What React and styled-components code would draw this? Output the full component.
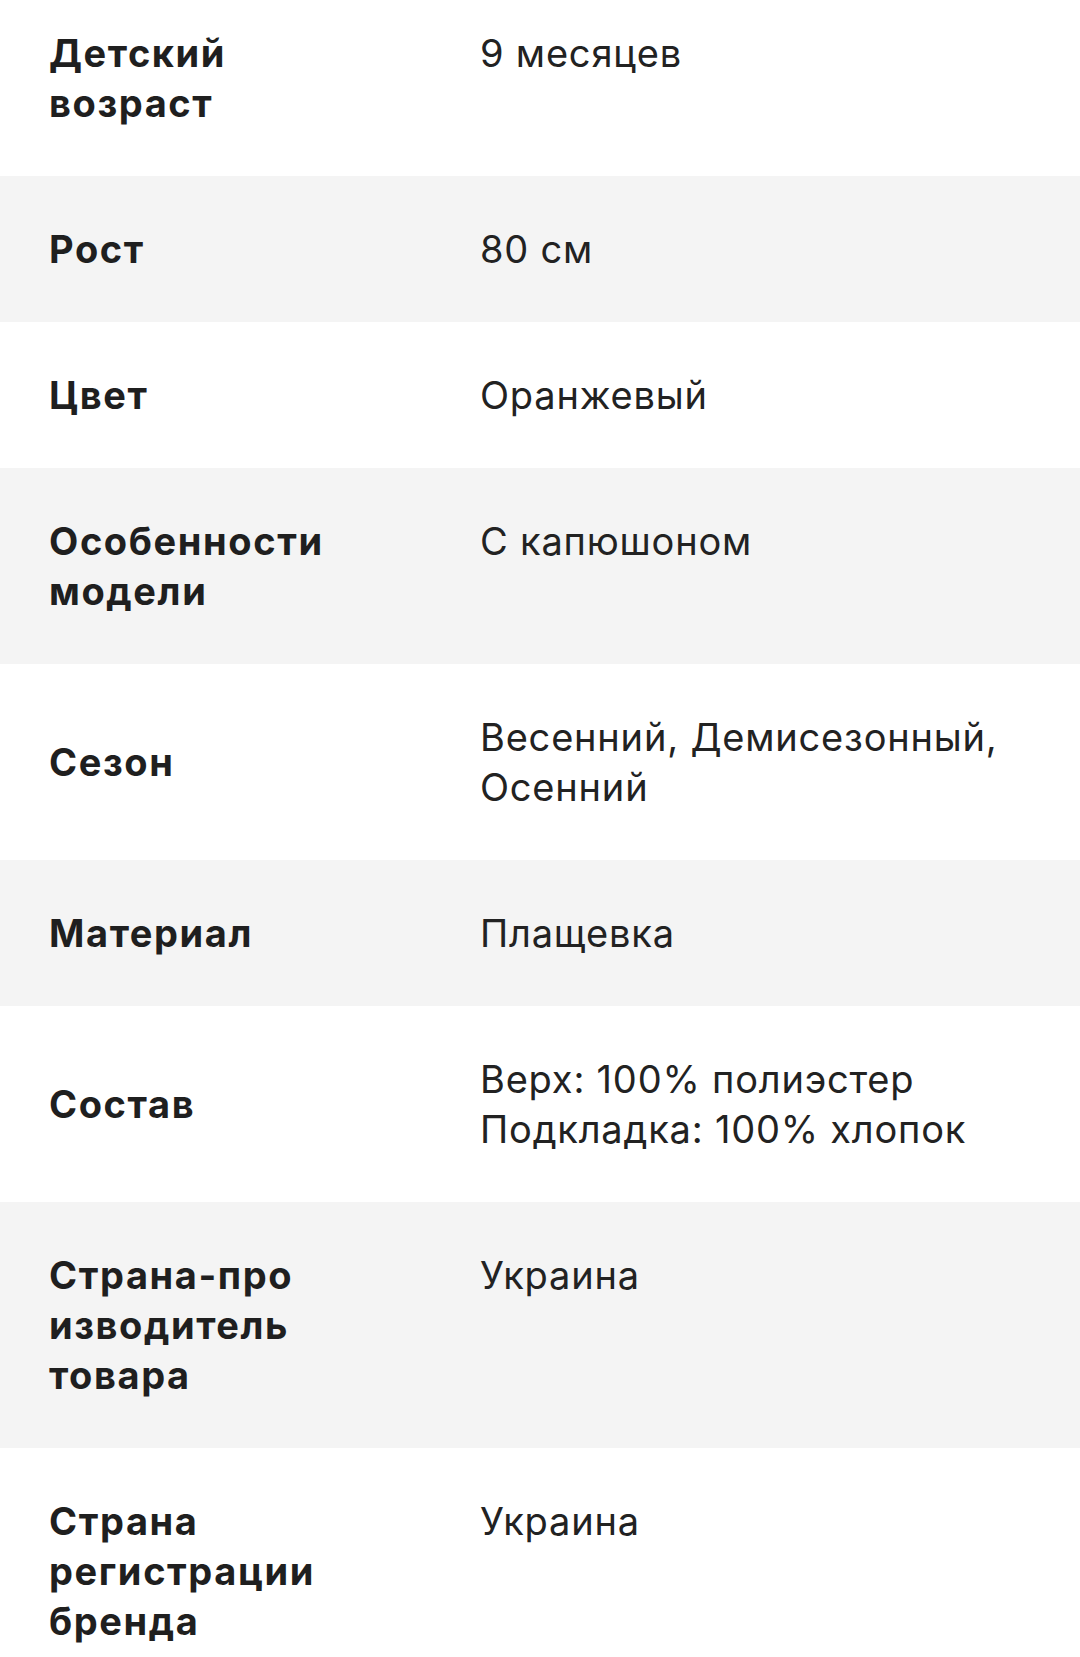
import styled, {createGlobalStyle} from 'styled-components';

const GlobalStyle = createGlobalStyle`
  html, body {
    margin: 0;
    padding: 0;
    background: #ffffff;
  }
  body {
    font-family: Inter, "Noto Sans", sans-serif;
    color: #1f1f1f;
    -webkit-font-smoothing: antialiased;
  }
`;

const specs = [
  {label: 'Детский\nвозраст', value: '9 месяцев'},
  {label: 'Рост', value: '80 см'},
  {label: 'Цвет', value: 'Оранжевый'},
  {label: 'Особенности\nмодели', value: 'С капюшоном'},
  {label: 'Сезон', value: 'Весенний, Демисезонный,\nОсенний'},
  {label: 'Материал', value: 'Плащевка'},
  {label: 'Состав', value: 'Верх: 100% полиэстер\nПодкладка: 100% хлопок'},
  {label: 'Страна-про\nизводитель\nтовара', value: 'Украина'},
  {label: 'Страна\nрегистрации\nбренда', value: 'Украина'},
];

const SpecList = styled.div`
  display: flex;
  flex-direction: column;
  width: 100%;
`;

const SpecRow = styled.div`
  display: flex;
  align-items: flex-start;
  padding: ${props => (props.first ? '28px' : '48px')} 49px 48px;
  background: ${props => (props.shaded ? '#f4f4f4' : '#ffffff')};
`;

const SpecLabel = styled.div`
  flex: 0 0 431px;
  align-self: center;
  font-size: 38px;
  line-height: 50px;
  font-weight: 700;
  letter-spacing: 1.6px;
  white-space: pre-line;
  color: #1f1f1f;
`;

const SpecValue = styled.div`
  flex: 1;
  font-size: 38px;
  line-height: 50px;
  font-weight: 400;
  letter-spacing: 0.8px;
  white-space: pre-line;
  color: #222222;
`;

const App = () => {
  return (
    <>
      <GlobalStyle/>
      <SpecList>
        {specs.map((spec, i) => (
          <SpecRow key={i} first={i === 0} shaded={i % 2 === 1}>
            <SpecLabel>{spec.label}</SpecLabel>
            <SpecValue>{spec.value}</SpecValue>
          </SpecRow>
        ))}
      </SpecList>
    </>
  );
};

export default App;
